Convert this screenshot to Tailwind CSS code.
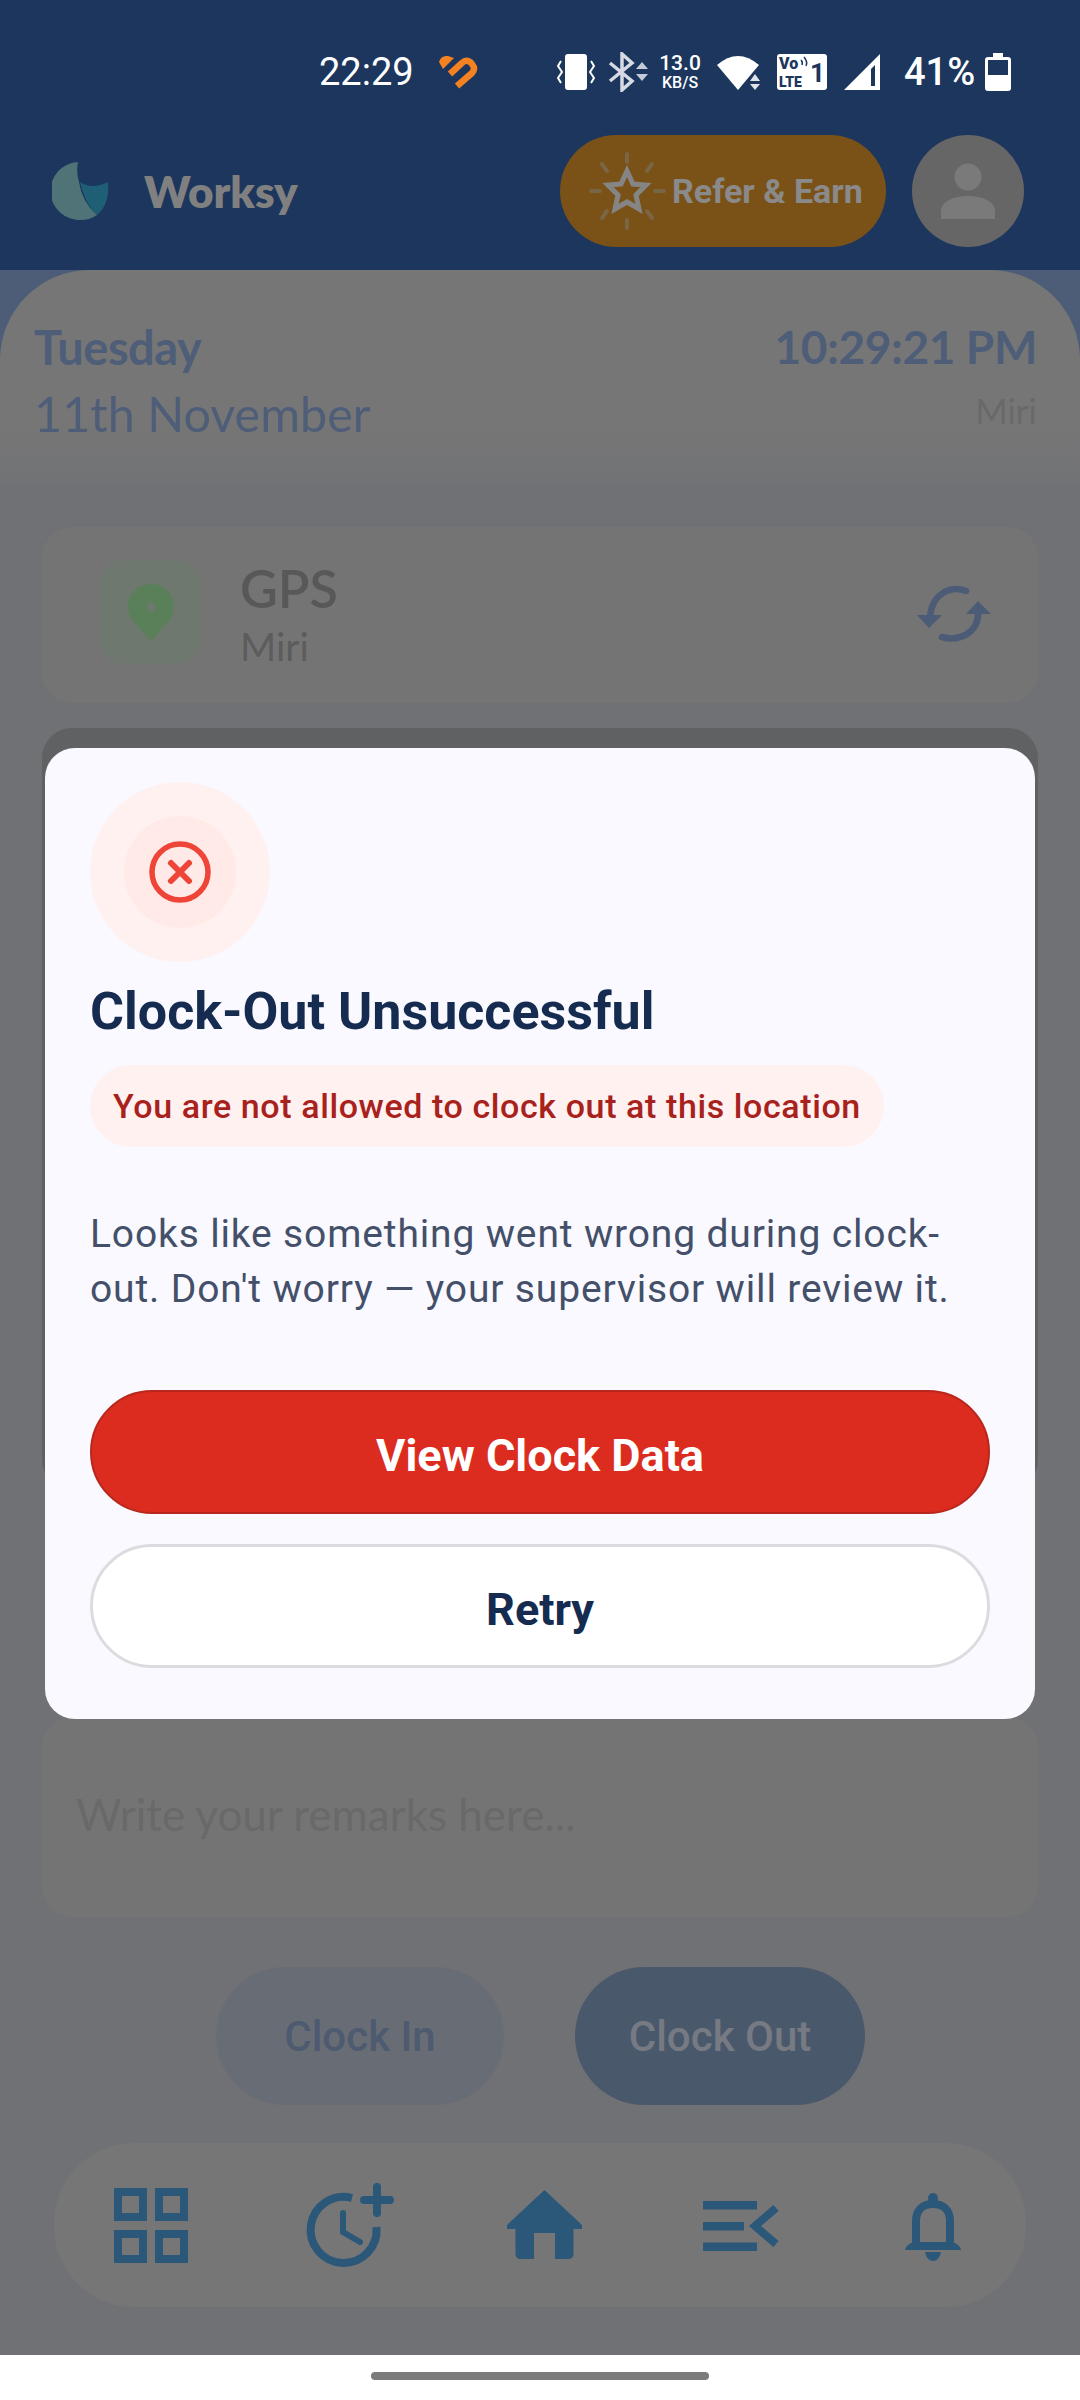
<!DOCTYPE html>
<html lang="en">
<head>
    <meta charset="UTF-8">
    <meta name="viewport" content="width=device-width, initial-scale=1.0">
    <title>Worksy</title>
    <script src="https://cdn.jsdelivr.net/npm/@tailwindcss/browser@4"></script>
</head>
<body class="relative w-[1080px] h-[2400px] overflow-hidden bg-[#6f7175] font-['Roboto',sans-serif]">

    <!-- header -->
    <header class="h-[270px] bg-[#1c365d]">
        <div class="flex items-center h-[144px] pl-[319px] text-white">
            <span class="w-[93px] text-[38px] leading-none whitespace-nowrap">22:29</span>
            <svg class="ml-[26px]" width="42" height="38" viewBox="8 8 42 38"><path d="M9 17 Q11 10 18 11 L24 13 L13 24Z" fill="#f58220"/><path d="M20 29 L32 18 Q37 13 42 19 Q46 24 42 28 L27 41" fill="none" stroke="#f58220" stroke-width="6.5"/></svg>
            <svg class="ml-[77px]" width="38" height="36" viewBox="0 0 38 36"><rect x="8" y="0" width="22" height="36" rx="3" fill="#fff"/><path d="M4 7 L1 12 L5 18 L1 24 L4 29 M34 7 L37 12 L33 18 L37 24 L34 29" stroke="#fff" stroke-width="2" fill="none"/></svg>
            <svg class="ml-[13px]" width="40" height="40" viewBox="0 0 40 40"><path d="M2 11 L24 29 L14 38 L14 2 L24 11 L2 29" stroke="#d5dae4" stroke-width="3.5" fill="none"/><path d="M28 17 L34 10 L40 17Z M28 22 L40 22 L34 29Z" fill="#c5ccd9"/></svg>
            <div class="ml-[9px] w-[46px] text-center">
                <div class="text-[21px] leading-[21px] font-medium">13.0</div>
                <div class="text-[16px] leading-[17px] font-medium">KB/S</div>
            </div>
            <svg class="ml-[14px]" width="46" height="38" viewBox="0 0 46 38"><path d="M0 12 Q21 -6 42 12 L21 37Z" fill="#fff"/><path d="M33 28 L38 21 L43 28Z M33 31 L43 31 L38 37Z" fill="#dfe3ea"/></svg>
            <svg class="ml-[14px]" width="50" height="36" viewBox="0 0 50 36"><rect width="50" height="36" rx="3" fill="#fff"/><text x="2" y="15" font-family="Roboto" font-weight="900" font-size="16" fill="#1c365d">Vo</text><text x="2" y="33" font-family="Roboto" font-weight="900" font-size="14" fill="#1c365d">LTE</text><text x="33" y="28" font-family="Roboto" font-weight="700" font-size="26" fill="#1c365d">1</text><path d="M24 6 Q26 8 25 11 M27 3 Q31 8 29 12" stroke="#1c365d" stroke-width="1.5" fill="none"/></svg>
            <svg class="ml-[16px]" width="38" height="38" viewBox="0 0 38 38"><path d="M1 37 L37 1 L37 37Z" fill="#fff"/><path d="M32 12 L32 33 L28 33 L28 16Z" fill="#1c365d"/></svg>
            <span class="w-[69px] ml-[23px] text-[38px] leading-none font-medium whitespace-nowrap">41%</span>
            <svg class="ml-[12px]" width="26" height="38" viewBox="0 0 26 38"><path d="M8 0 H18 V4 H23 Q26 4 26 7 V35 Q26 38 23 38 H3 Q0 38 0 35 V7 Q0 4 3 4 H8Z" fill="#fff"/><rect x="3" y="7" width="20" height="15" fill="#1c365d"/></svg>
        </div>
        <div class="flex items-center h-[112px] mt-[-9px] pl-[52px] pr-[56px]">
            <svg width="58" height="58" viewBox="0 0 58 58"><path d="M28 20 Q40 28 56 20 Q58 42 45 53 Q33 42 28 20Z" fill="#1f5f75"/><path d="M26 0 A29 29 0 0 0 29 58 Q38 58 45 53 Q30 40 27 20 Q24 10 26 0Z" fill="#4f7377"/></svg>
            <span class="ml-[34px] font-['Lato',sans-serif] font-extrabold text-[44px] leading-none text-[#808080]">Worksy</span>
            <div class="ml-auto flex items-center w-[326px] h-[112px] rounded-full bg-[#7a5218]">
                <svg class="ml-[28px]" width="78" height="78" viewBox="0 0 78 78" fill="none" stroke="#858585" stroke-width="5"><path d="M39 19 L45 32 L58 33 L48 43 L51 57 L39 50 L27 57 L30 43 L20 33 L33 32Z"/><path stroke-width="4" stroke-linecap="round" d="M39 2 V10 M39 68 V76 M3 39 H12 M67 39 H76 M14 12 L19 19 M64 12 L59 19 M14 66 L19 59 M64 66 L59 59" stroke="#7a6545"/></svg>
                <span class="ml-[6px] text-[34px] leading-none font-bold text-[#8a8a8a] whitespace-nowrap">Refer &amp; Earn</span>
            </div>
            <div class="ml-[26px] flex items-center justify-center w-[112px] h-[112px] rounded-full bg-[#666666]">
                <svg width="56" height="56" viewBox="0 0 56 56" fill="#7a7a7a"><circle cx="28" cy="14" r="13.5"/><path d="M1 56 V48 C1 38 15 33 28 33 C41 33 55 38 55 48 V56Z"/></svg>
            </div>
        </div>
    </header>

    <!-- date sheet -->
    <div class="bg-[#4d5d78]">
        <div class="flex justify-between h-[215px] pt-[49px] pl-[34px] pr-[43px] rounded-t-[90px] bg-linear-to-b from-[#767676] from-70% to-[#727376] font-['Lato',sans-serif]">
            <div>
                <div class="text-[47px] leading-[56px] font-bold text-[#4f5e78] tracking-[-0.5px]">Tuesday</div>
                <div class="mt-[10px] text-[48.5px] leading-[56px] text-[#4f5e78]">11th November</div>
            </div>
            <div class="text-right">
                <div class="text-[46px] leading-[56px] font-bold text-[#4f5e78] tracking-[-0.4px]">10:29:21 PM</div>
                <div class="mt-[13px] text-[35px] leading-[44px] text-[#696969]">Miri</div>
            </div>
        </div>
    </div>

    <!-- gps card -->
    <div class="flex items-center h-[176px] mx-[42px] mt-[42px] pl-[58px] pr-[46px] rounded-[30px] bg-[#747474]">
        <div class="flex items-center justify-center w-[102px] h-[104px] mt-[-6px] rounded-[24px] bg-[#6f786f]">
            <svg width="46" height="57" viewBox="0 0 46 57"><path fill-rule="evenodd" d="M23 0 C36 0 46 10 46 23 C46 36 32 46 23 57 C14 46 0 36 0 23 C0 10 10 0 23 0Z M23 18 A4 5 0 1 0 23 28 A4 5 0 1 0 23 18Z" fill="#5a8059"/></svg>
        </div>
        <div class="ml-[38px] mt-[-2px]">
            <div class="font-['Lato',sans-serif] text-[52px] leading-[56px] font-semibold text-[#585858]">GPS</div>
            <div class="mt-[7px] font-['Lato',sans-serif] text-[39px] leading-[46px] text-[#5c5c5c]">Miri</div>
        </div>
        <svg class="ml-auto overflow-visible" width="76" height="56" viewBox="16 17 76 56" fill="none" stroke="#4d5c76" stroke-width="6.5" stroke-linecap="round"><path d="M66 21 C50 15 32 24 30 47"/><path d="M42 67 C60 72 78 62 78 44"/><path d="M17 45 H42 L29 58Z M66 44 H91 L78 31Z" fill="#4d5c76" stroke="none"/></svg>
    </div>

    <!-- map card behind dialog -->
    <div class="h-[762px] mx-[42px] mt-[25px] rounded-[30px] bg-[#606163]"></div>

    <!-- remarks -->
    <div class="flex items-center h-[200px] mx-[42px] mt-[227px] pl-[34px] pb-[6px] rounded-[30px] bg-[#747474]">
        <span class="font-['Lato',sans-serif] text-[44px] leading-none text-[#696969]">Write your remarks here...</span>
    </div>

    <!-- clock buttons -->
    <div class="flex gap-[71px] mt-[50px] pl-[216px]">
        <button class="w-[288px] h-[138px] rounded-full bg-[#686d75] text-[42px] font-medium text-[#4e5a70]">Clock In</button>
        <button class="w-[290px] h-[138px] rounded-full bg-[#4a586c] text-[42px] font-medium text-[#767a82]">Clock Out</button>
    </div>

    <!-- bottom nav -->
    <nav class="flex items-center justify-between h-[164px] mx-[54px] mt-[38px] pl-[52px] pr-[49px] rounded-[80px] bg-[#767676]">
        <svg width="90" height="90" viewBox="0 0 90 90" fill="none" stroke="#2b5779" stroke-width="8"><rect x="12" y="12" width="25" height="25"/><rect x="53" y="12" width="25" height="25"/><rect x="12" y="54" width="25" height="25"/><rect x="53" y="54" width="25" height="25"/></svg>
        <svg class="overflow-visible" width="90" height="90" viewBox="0 0 90 90" fill="none" stroke="#2b5779" stroke-width="8" stroke-linecap="round"><path d="M51 18 A33 33 0 1 0 75.5 47" stroke-linecap="butt"/><path d="M42 33 V52 L59 62" stroke-width="6"/><path d="M76 7 V33 M63 20 H89" stroke-width="8"/></svg>
        <svg width="90" height="90" viewBox="0 0 90 90" fill="#2b5779"><path d="M47.5 10 L85 45 L85 49 L76.5 49 V74 Q76.5 79 71 79 H58 V53 H37 V79 H24 Q18.5 79 18.5 74 V49 H10 V45Z"/></svg>
        <svg class="overflow-visible" width="90" height="90" viewBox="0 0 90 90" fill="#2b5779"><rect x="11" y="21" width="54" height="8.5"/><rect x="11" y="42" width="41" height="8.5"/><rect x="11" y="62.5" width="54" height="8.5"/><path d="M84 28 L63 46 L84 64" fill="none" stroke="#2b5779" stroke-width="8"/></svg>
        <svg width="90" height="90" viewBox="0 0 90 90" fill="none" stroke="#2b5779" stroke-width="8"><path d="M29 62 V41 C29 30 36 24 46 24 C56 24 63 30 63 41 V62"/><path d="M18 70 Q19 65 26 62 H66 Q73 65 74 70Z" fill="#2b5779" stroke="none"/><circle cx="46" cy="18" r="5" fill="#2b5779" stroke="none"/><path d="M38 72 H54 Q52 81 46 81 Q40 81 38 72Z" fill="#2b5779" stroke="none"/></svg>
    </nav>

    <!-- system gesture bar -->
    <div class="absolute left-0 bottom-0 flex justify-center w-full h-[45px] pt-[17px] bg-white">
        <div class="w-[338px] h-[8px] rounded-full bg-[#7b7b7b]"></div>
    </div>

    <!-- dialog -->
    <div class="absolute left-[45px] top-[748px] w-[990px] h-[971px] px-[45px] pt-[34px] rounded-[30px] bg-[#f9f9ff]">
        <div class="flex items-center justify-center w-[180px] h-[180px] rounded-full bg-[#fff1ef]">
            <div class="flex items-center justify-center w-[112px] h-[112px] rounded-full bg-[#ffeae7]">
                <svg width="62" height="62" viewBox="0 0 62 62" fill="none" stroke="#ef4438"><circle cx="31" cy="31" r="28" stroke-width="5.5"/><path d="M22 22 L40 40 M40 22 L22 40" stroke-width="6" stroke-linecap="round"/></svg>
            </div>
        </div>
        <h2 class="mt-[20px] text-[52px] leading-[60px] font-bold text-[#152c50] whitespace-nowrap">Clock-Out Unsuccessful</h2>
        <div class="inline-flex items-center h-[82px] mt-[23px] px-[23px] rounded-full bg-[#fff1ef]">
            <span class="text-[34px] leading-none font-medium tracking-[0.6px] text-[#a8211c] whitespace-nowrap">You are not allowed to clock out at this location</span>
        </div>
        <p class="mt-[60px] text-[39px] leading-[55px] tracking-[0.85px] text-[#445069] whitespace-nowrap">Looks like something went wrong during clock-<br>out. Don't worry — your supervisor will review it.</p>
        <button class="block w-[900px] h-[124px] mt-[73px] pt-[8px] rounded-full border-[2px] border-[#b8271c] bg-[#dc2c1f] text-[45px] font-bold text-white">View Clock Data</button>
        <button class="block w-[900px] h-[124px] mt-[30px] pt-[8px] rounded-full border-[3px] border-[#dcdce0] bg-white text-[45px] font-bold text-[#152c50]">Retry</button>
    </div>

</body>
</html>
